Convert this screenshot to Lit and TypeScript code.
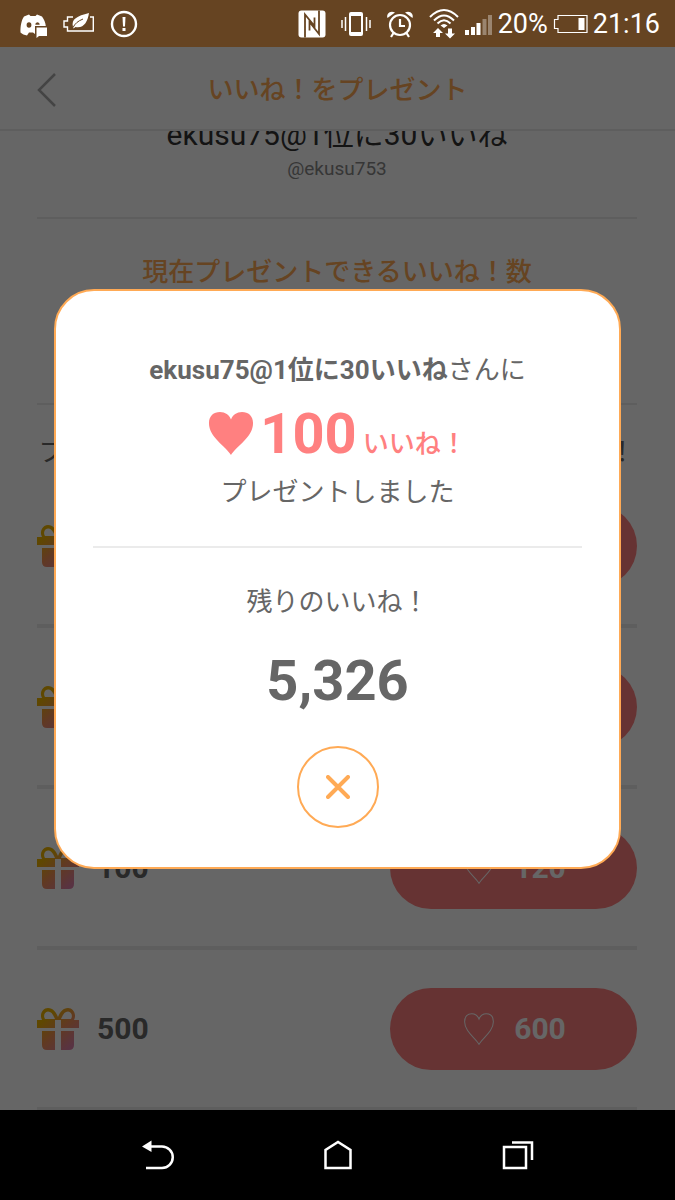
import { LitElement, html, css, svg } from "lit";
import { customElement, property, state } from "lit/decorators.js";

interface GiftOption {
  amount: number;
  cost: number;
}

const HEART =
  "M24 47C19 38 1 28 1 13C1 5 6 1 12.5 1C18 1 22 4 24 9C26 4 30 1 35.500 1C42 1 47 5 47 13C47 28 29 38 24 47Z";

@customElement("status-bar")
export class StatusBar extends LitElement {
  static styles = css`
    :host {
      display: flex;
      align-items: center;
      justify-content: space-between;
      height: 47px;
      padding: 0 15px 0 20px;
      box-sizing: border-box;
      background: #664422;
      color: #fff;
      font: 27px/30px Roboto, "Noto Sans CJK JP", sans-serif;
    }
    .group {
      display: flex;
      align-items: center;
    }
    .notices {
      gap: 16px;
    }
    .system {
      gap: 5px;
    }
    .radios {
      display: flex;
      align-items: center;
      gap: 15px;
      margin-right: 1px;
    }
    svg {
      display: block;
    }
  `;

  render() {
    return html`
      <div class="group notices">
        <svg width="27" height="28" viewBox="0 0 27 28" fill="#fff">
          <path
            fill-rule="evenodd"
            d="M4 6.500L9 4.500L10.500 6H15.500L17 4.500L22 6.500C24 9.500 25.500 12.500 25.800 16H15V24L13 22.500H9L7 25.500C4.500 25 2 24 .5 22.500C.3 16 1.500 10 4 6.500ZM9 12.300A2.400 2.700 0 1 0 9 17.700A2.400 2.700 0 1 0 9 12.300ZM17.500 12.300A2.300 2.400 0 0 0 15.300 14.800H19.700A2.300 2.400 0 0 0 17.500 12.300Z"
          />
          <path d="M16.500 17.500H27V26H19L16.500 28Z" />
        </svg>
        <svg width="31" height="28" viewBox="0 0 31 28">
          <path
            d="M10 7H4.500V11H1V17H4.500V21H30.300V7H27"
            fill="none"
            stroke="#fff"
            stroke-width="1.400"
          />
          <path
            d="M10 17C8 9 14 6 26 3C24.500 12 21 18.500 12.500 17L10.500 18.500Z"
            fill="#fff"
          />
          <path
            d="M10 17.500C12 13.500 15 11 20 9"
            fill="none"
            stroke="#664422"
            stroke-width="1"
          />
        </svg>
        <svg width="28" height="28" viewBox="0 0 28 28" fill="none">
          <circle cx="14" cy="14" r="12" stroke="#fff" stroke-width="2.400" />
          <path d="M12.500 7H15.500L15 16.500H13Z" fill="#fff" />
          <rect x="12.500" y="18" width="3" height="3" fill="#fff" />
        </svg>
      </div>
      <div class="group system">
        <div class="radios">
          <svg width="28" height="28" viewBox="0 0 28 28">
            <rect x=".5" y=".5" width="27" height="27" rx="3" fill="#fff" />
            <path
              d="M7 27.500V4.500L16.500 16V7.500M21 .5V24L11.500 12V20.500"
              fill="none"
              stroke="#664422"
              stroke-width="1.800"
            />
          </svg>
          <svg width="30" height="28" viewBox="0 0 30 28" fill="none">
            <path
              d="M1 10V18M4.500 7V21M25.500 7V21M29 10V18"
              stroke="#fff"
              stroke-width="1.500"
            />
            <rect x="8" y="2" width="14" height="24" rx="2" fill="#fff" />
            <rect x="10" y="6" width="10" height="16" fill="#664422" />
          </svg>
          <svg
            width="28"
            height="28"
            viewBox="0 0 28 28"
            fill="none"
            stroke="#fff"
            stroke-width="2.200"
          >
            <circle cx="14" cy="15" r="10" />
            <path d="M14 9V16H19M7.500 23L5 27M20.500 23L23 27" />
            <path
              d="M1.500 8C0 4 4 0 9 2.500ZM26.500 8C28 4 24 0 19 2.500Z"
              fill="#fff"
              stroke="none"
            />
          </svg>
          <svg width="30" height="30" viewBox="0 0 30 30" fill="none">
            <path
              d="M1 8Q15 -6 29 8M5 11.500Q15 1.500 25 11.500M8.500 14.500Q15 8 21.500 14.500"
              stroke="#fff"
              stroke-width="2"
            />
            <path
              d="M11.500 16.500Q15 13.500 18.500 16.500L15 19ZM9 19L14 24H11V28H7V24H4ZM21 29.500L26 24.500H23V19.500H19V24.500H16Z"
              fill="#fff"
            />
          </svg>
        </div>
        <svg width="28" height="28" viewBox="0 0 28 28" fill="#fff">
          <path d="M0 20H4V25H0ZM6 17H10V25H6ZM11.500 13H15.500V25H11.500Z" />
          <path d="M17.500 9H21.500V25H17.500ZM23 5H27V25H23Z" opacity=".35" />
        </svg>
        <span>20%</span>
        <svg width="35" height="20" viewBox="0 0 35 20">
          <path
            d="M5 1.500H34V18.500H5V14.500H1.500V5.500H5Z"
            fill="none"
            stroke="#fff"
            stroke-width="1.200"
          />
          <rect x="25.500" y="4" width="6" height="12" fill="#fff" />
        </svg>
        <span>21:16</span>
      </div>
    `;
  }
}

@customElement("gift-row")
export class GiftRow extends LitElement {
  static styles = css`
    :host {
      display: flex;
      align-items: center;
      height: 157px;
      border-bottom: 4px solid #ebebeb;
      font: 700 30px/40px Roboto, "Noto Sans CJK JP", sans-serif;
    }
    .icon {
      display: block;
      margin-right: 18px;
    }
    .amount {
      flex: 1;
      color: #666;
    }
    .buy {
      display: flex;
      align-items: center;
      justify-content: center;
      gap: 20px;
      width: 247px;
      height: 82px;
      padding: 0 0 0 3px;
      border: 0;
      border-radius: 41px;
      background: #ff8080;
      color: #fff;
      font: inherit;
    }
  `;

  @property({ type: Number }) amount = 0;
  @property({ type: Number }) cost = 0;

  render() {
    return html`
      <svg class="icon" width="42" height="42" viewBox="0 0 42 42">
        <defs>
          <linearGradient
            id="wrap"
            gradientUnits="userSpaceOnUse"
            x1="6"
            y1="6"
            x2="36"
            y2="40"
          >
            <stop offset=".1" stop-color="#eeb400" />
            <stop offset=".5" stop-color="#f29055" />
            <stop offset=".95" stop-color="#dd80a8" />
          </linearGradient>
        </defs>
        <path
          fill="url(#wrap)"
          fill-rule="evenodd"
          d="M0 12H5C2 6 6 0 11 0C16 0 19 4 21 9C23 4 26 0 31 0C36 0 40 6 37 12H42V20H24V12H18V20H0ZM8 11H18C16 6 14 3.500 11 3.500C7.500 3.500 6 8 8 11ZM34 11C36 8 34.500 3.500 31 3.500C28 3.500 26 6 24 11ZM5 23H18V42H10Q5 42 5 37ZM24 23H37V37Q37 42 32 42H24Z"
        />
      </svg>
      <span class="amount">${this.amount}</span>
      <button class="buy">
        <svg width="30" height="32" viewBox="0 0 48 48" preserveAspectRatio="none">
          <path d=${HEART} fill="none" stroke="#fff" stroke-width="1.600" />
        </svg>
        <span>${this.cost}</span>
      </button>
    `;
  }
}

@customElement("nav-bar")
export class NavBar extends LitElement {
  static styles = css`
    :host {
      display: grid;
      grid-template-columns: repeat(3, 1fr);
      height: 90px;
      padding: 0 10%;
      box-sizing: border-box;
      background: #000;
    }
    button {
      display: grid;
      place-items: center;
      padding: 0;
      border: 0;
      background: none;
    }
  `;

  private key(label: string, shape: unknown) {
    return html`<button aria-label=${label}>
      <svg
        width="32"
        height="30"
        viewBox="0 0 32 30"
        fill="none"
        stroke="#fff"
        stroke-width="2.500"
      >
        ${shape}
      </svg>
    </button>`;
  }

  render() {
    return html`
      ${this.key(
        "戻る",
        svg`<path d="M8 6.500H20A10.700 10.700 0 0 1 20 28H4" /><path d="M0 6.500L9.500 .5V12Z" fill="#fff" stroke="none" />`
      )}
      ${this.key(
        "ホーム",
        svg`<path d="M3.500 28V10L16 2L28.500 10V28Z" />`
      )}
      ${this.key(
        "アプリ履歴",
        svg`<path d="M2 7H24V28H2ZM10 2.500H30V20" />`
      )}
    `;
  }
}

@customElement("app-root")
export class AppRoot extends LitElement {
  static styles = css`
    :host {
      display: grid;
      grid-template-rows: auto 1fr auto;
      height: 100vh;
      font: 26px/44px Roboto, "Noto Sans CJK JP", sans-serif;
      color: #666;
    }
    .screen {
      position: relative;
      display: flex;
      flex-direction: column;
      min-height: 0;
      overflow: hidden;
      background: #fff;
    }
    .header {
      display: grid;
      grid-template-columns: 94px 1fr 94px;
      align-items: center;
      flex: none;
      height: 84px;
      padding-top: 4px;
      box-sizing: border-box;
      border-bottom: 2px solid #ebebeb;
    }
    .back {
      display: grid;
      place-items: center;
      padding: 0;
      border: 0;
      background: none;
    }
    h1,
    h2,
    p {
      margin: 0;
      font-size: inherit;
      text-align: center;
    }
    h1,
    h2 {
      color: #ffaa55;
      font-weight: 500;
    }
    .content {
      flex: 1;
      min-height: 0;
      overflow: hidden;
      padding: 0 38px 0 37px;
    }
    .profile {
      margin-top: -16px;
      padding-bottom: 34px;
      border-bottom: 2px solid #ebebeb;
    }
    .name {
      color: #333;
      font-size: 30px;
      line-height: 40px;
    }
    .handle {
      color: #888;
      font-size: 19px;
      line-height: 28px;
    }
    .balance {
      padding: 31px 0 25px;
      border-bottom: 2px solid #ebebeb;
    }
    .total {
      font-size: 56px;
      font-weight: 700;
      line-height: 84px;
    }
    .prompt {
      margin-top: 32px;
      line-height: 30px;
      white-space: nowrap;
    }
    .overlay {
      position: absolute;
      inset: 0;
      display: flex;
      align-items: center;
      justify-content: center;
      background: rgba(0, 0, 0, 0.6);
    }
    .dialog {
      display: flex;
      flex-direction: column;
      width: 84%;
      box-sizing: border-box;
      padding: 57px 37px 39px;
      border: 2px solid #ffaa55;
      border-radius: 40px;
      background: #fff;
    }
    .sent {
      display: flex;
      align-items: baseline;
      justify-content: center;
      margin-top: 6px;
      color: #ff8080;
      font-weight: 700;
      line-height: 72px;
    }
    .heart {
      width: 46px;
      height: 45px;
      margin-right: 6px;
      align-self: center;
    }
    .count {
      margin-right: 6px;
      font-size: 56px;
    }
    .unit {
      font-weight: 500;
      line-height: 30px;
    }
    .done {
      line-height: 44px;
    }
    .rule {
      width: 100%;
      height: 2px;
      margin: 32px 0;
      border: 0;
      background: #ebebeb;
    }
    .left {
      margin: 15px 0 23px;
    }
    .close {
      display: grid;
      place-items: center;
      align-self: center;
      width: 82px;
      height: 82px;
      padding: 0;
      border: 2px solid #ffaa55;
      border-radius: 50%;
      background: #fff;
    }
  `;

  @state() private open = true;

  private readonly user = "ekusu75@1位に30いいね";
  private readonly options: GiftOption[] = [
    { amount: 10, cost: 12 },
    { amount: 50, cost: 60 },
    { amount: 100, cost: 120 },
    { amount: 500, cost: 600 },
  ];

  private close() {
    this.open = false;
  }

  private dialog() {
    return html`
      <div class="overlay">
        <section class="dialog" role="dialog" aria-modal="true">
          <p><strong>${this.user}</strong>さんに</p>
          <p class="sent">
            <svg class="heart" viewBox="0 0 48 48" preserveAspectRatio="none">
              <path d=${HEART} fill="#ff8080" />
            </svg>
            <span class="count">100</span>
            <span class="unit">いいね！</span>
          </p>
          <p class="done">プレゼントしました</p>
          <hr class="rule" />
          <p>残りのいいね！</p>
          <p class="total left">5,326</p>
          <button class="close" aria-label="閉じる" @click=${this.close}>
            <svg width="24" height="24" viewBox="0 0 24 24">
              <path
                d="M2 2L22 22M22 2L2 22"
                stroke="#ffaa55"
                stroke-width="4"
                stroke-linecap="round"
              />
            </svg>
          </button>
        </section>
      </div>
    `;
  }

  render() {
    return html`
      <status-bar></status-bar>
      <div class="screen">
        <header class="header">
          <button class="back" aria-label="戻る">
            <svg width="20" height="36" viewBox="0 0 20 36">
              <path
                d="M18 2L2 18L18 34"
                fill="none"
                stroke="#aaa"
                stroke-width="2.500"
              />
            </svg>
          </button>
          <h1>いいね！をプレゼント</h1>
        </header>
        <main class="content">
          <div class="profile">
            <p class="name">${this.user}</p>
            <p class="handle">@ekusu753</p>
          </div>
          <div class="balance">
            <h2>現在プレゼントできるいいね！数</h2>
            <p class="total">5,326</p>
          </div>
          <p class="prompt">プレゼントするいいね！の数を選択してください！</p>
          ${this.options.map(
            (o) =>
              html`<gift-row .amount=${o.amount} .cost=${o.cost}></gift-row>`
          )}
        </main>
        ${this.open ? this.dialog() : null}
      </div>
      <nav-bar></nav-bar>
    `;
  }
}
